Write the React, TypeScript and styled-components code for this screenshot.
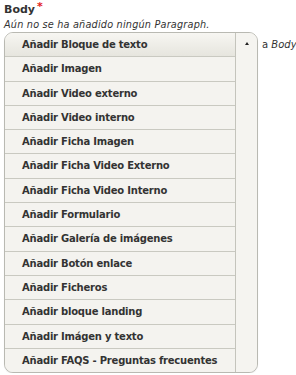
import React from 'react';
import styled, { createGlobalStyle } from 'styled-components';

const GlobalStyle = createGlobalStyle`
  body {
    margin: 0;
    background: #ffffff;
    font-family: "DejaVu Sans", "Liberation Sans", sans-serif;
    color: #333333;
  }
`;

const Field = styled.div`
  padding: 3px 4px 0 4px;
`;

const Label = styled.div`
  font-size: 11px;
  font-weight: bold;
  line-height: 14px;
  color: #333;
`;

const Required = styled.span`
  color: #e21c1c;
  font-size: 11px;
  vertical-align: top;
  position: relative;
  top: -3px;
  margin-left: 2px;
`;

const Description = styled.div`
  font-size: 9.7px;
  font-style: italic;
  line-height: 15px;
  color: #333;
  letter-spacing: 0.2px;
`;

const Controls = styled.div`
  display: flex;
  align-items: flex-start;
  margin-top: 0;
`;

const Dropdown = styled.div`
  display: flex;
  flex-shrink: 0;
  width: 252px;
  border: 1px solid #b9b9b2;
  border-radius: 9px;
  overflow: hidden;
  background: #f4f3ef;
  box-shadow: 0 1px 1px rgba(0, 0, 0, 0.08);
`;

const List = styled.ul`
  list-style: none;
  margin: 0;
  padding: 0;
  width: 230px;
  border-right: 1px solid #c4c4bc;
`;

const Item = styled.li<{ $active?: boolean }>`
  height: 23.3px;
  line-height: 23.3px;
  padding-left: 17px;
  border-bottom: 1px solid #c9c9c1;
  font-size: 10px;
  letter-spacing: -0.22px;
  font-weight: bold;
  color: #333;
  white-space: nowrap;
  background: ${(p) =>
    p.$active
      ? 'linear-gradient(to bottom, #f7f6f2 0%, #e6e5de 100%)'
      : '#f4f3ef'};
  &:last-child {
    border-bottom: none;
  }
`;

const Toggle = styled.div`
  flex: 1;
  display: flex;
  justify-content: center;
  padding-top: 9px;
  background: #f5f4f0;
`;

const Arrow = styled.span`
  width: 0;
  height: 0;
  border-left: 2.5px solid transparent;
  border-right: 2.5px solid transparent;
  border-bottom: 3px solid #222;
`;

const Target = styled.div`
  font-size: 10px;
  margin-left: 4px;
  margin-top: 7px;
  color: #333;
  white-space: nowrap;
  em {
    font-style: italic;
  }
`;

const items = [
  'Añadir Bloque de texto',
  'Añadir Imagen',
  'Añadir Video externo',
  'Añadir Video interno',
  'Añadir Ficha Imagen',
  'Añadir Ficha Video Externo',
  'Añadir Ficha Video Interno',
  'Añadir Formulario',
  'Añadir Galería de imágenes',
  'Añadir Botón enlace',
  'Añadir Ficheros',
  'Añadir bloque landing',
  'Añadir Imágen y texto',
  'Añadir FAQS - Preguntas frecuentes',
];

export default function App() {
  return (
    <>
      <GlobalStyle />
      <Field>
        <Label>
          Body<Required>*</Required>
        </Label>
        <Description>Aún no se ha añadido ningún Paragraph.</Description>
        <Controls>
          <Dropdown>
            <List>
              {items.map((item, i) => (
                <Item key={item} $active={i === 0}>
                  {item}
                </Item>
              ))}
            </List>
            <Toggle>
              <Arrow />
            </Toggle>
          </Dropdown>
          <Target>
            a <em>Body</em>
          </Target>
        </Controls>
      </Field>
    </>
  );
}
